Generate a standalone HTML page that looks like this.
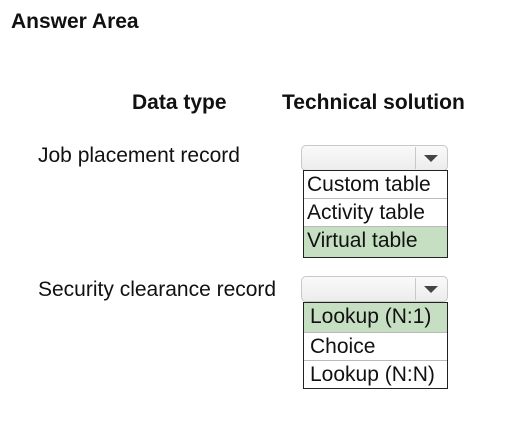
<html><head><style>
body{margin:0;width:520px;height:437px;background:#fff;font-family:"Liberation Sans",Arial,sans-serif;position:relative;overflow:hidden}
.t{position:absolute;color:#111;white-space:nowrap;font-size:21px}
.dd{position:absolute;left:301px;width:145px;height:24px;border:1px solid #c8c8c8;border-radius:5px;background:linear-gradient(#fafafa,#ececec)}
.dd .div{position:absolute;left:113px;top:1px;bottom:1px;border-left:1px solid #c8c8c8}
.dd .ar{position:absolute;left:122px;top:9px;width:0;height:0;border-left:7px solid transparent;border-right:7px solid transparent;border-top:7px solid #444}
.ls{position:absolute;left:303px;width:143px;border:1.5px solid #222;background:#fff}
.ls div{height:27px;line-height:27px;padding-left:3px;font-size:21px;border-bottom:1px solid #bbb;color:#111;white-space:nowrap}
.ls div:last-child{border-bottom:none}
.g{background:#c6dfc3}
</style></head><body>
<div class="t" style="left:11px;top:10px;font-weight:bold">Answer Area</div>
<div class="t" style="left:132px;top:91px;font-weight:bold">Data type</div>
<div class="t" style="left:282px;top:91px;font-weight:bold">Technical solution</div>
<div class="t" style="left:38px;top:144px">Job placement record</div>
<div class="t" style="left:38px;top:278px">Security clearance record</div>
<div class="dd" style="top:145px"><div class="div"></div><div class="ar"></div></div>
<div class="ls" style="top:170px"><div>Custom table</div><div>Activity table</div><div class="g" style="height:30px">Virtual table</div></div>
<div class="dd" style="top:276px"><div class="div"></div><div class="ar"></div></div>
<div class="ls" style="top:302px"><div class="g" style="height:29px;padding-left:6px">Lookup (N:1)</div><div style="padding-left:6px">Choice</div><div style="padding-left:6px">Lookup (N:N)</div></div>
</body></html>
